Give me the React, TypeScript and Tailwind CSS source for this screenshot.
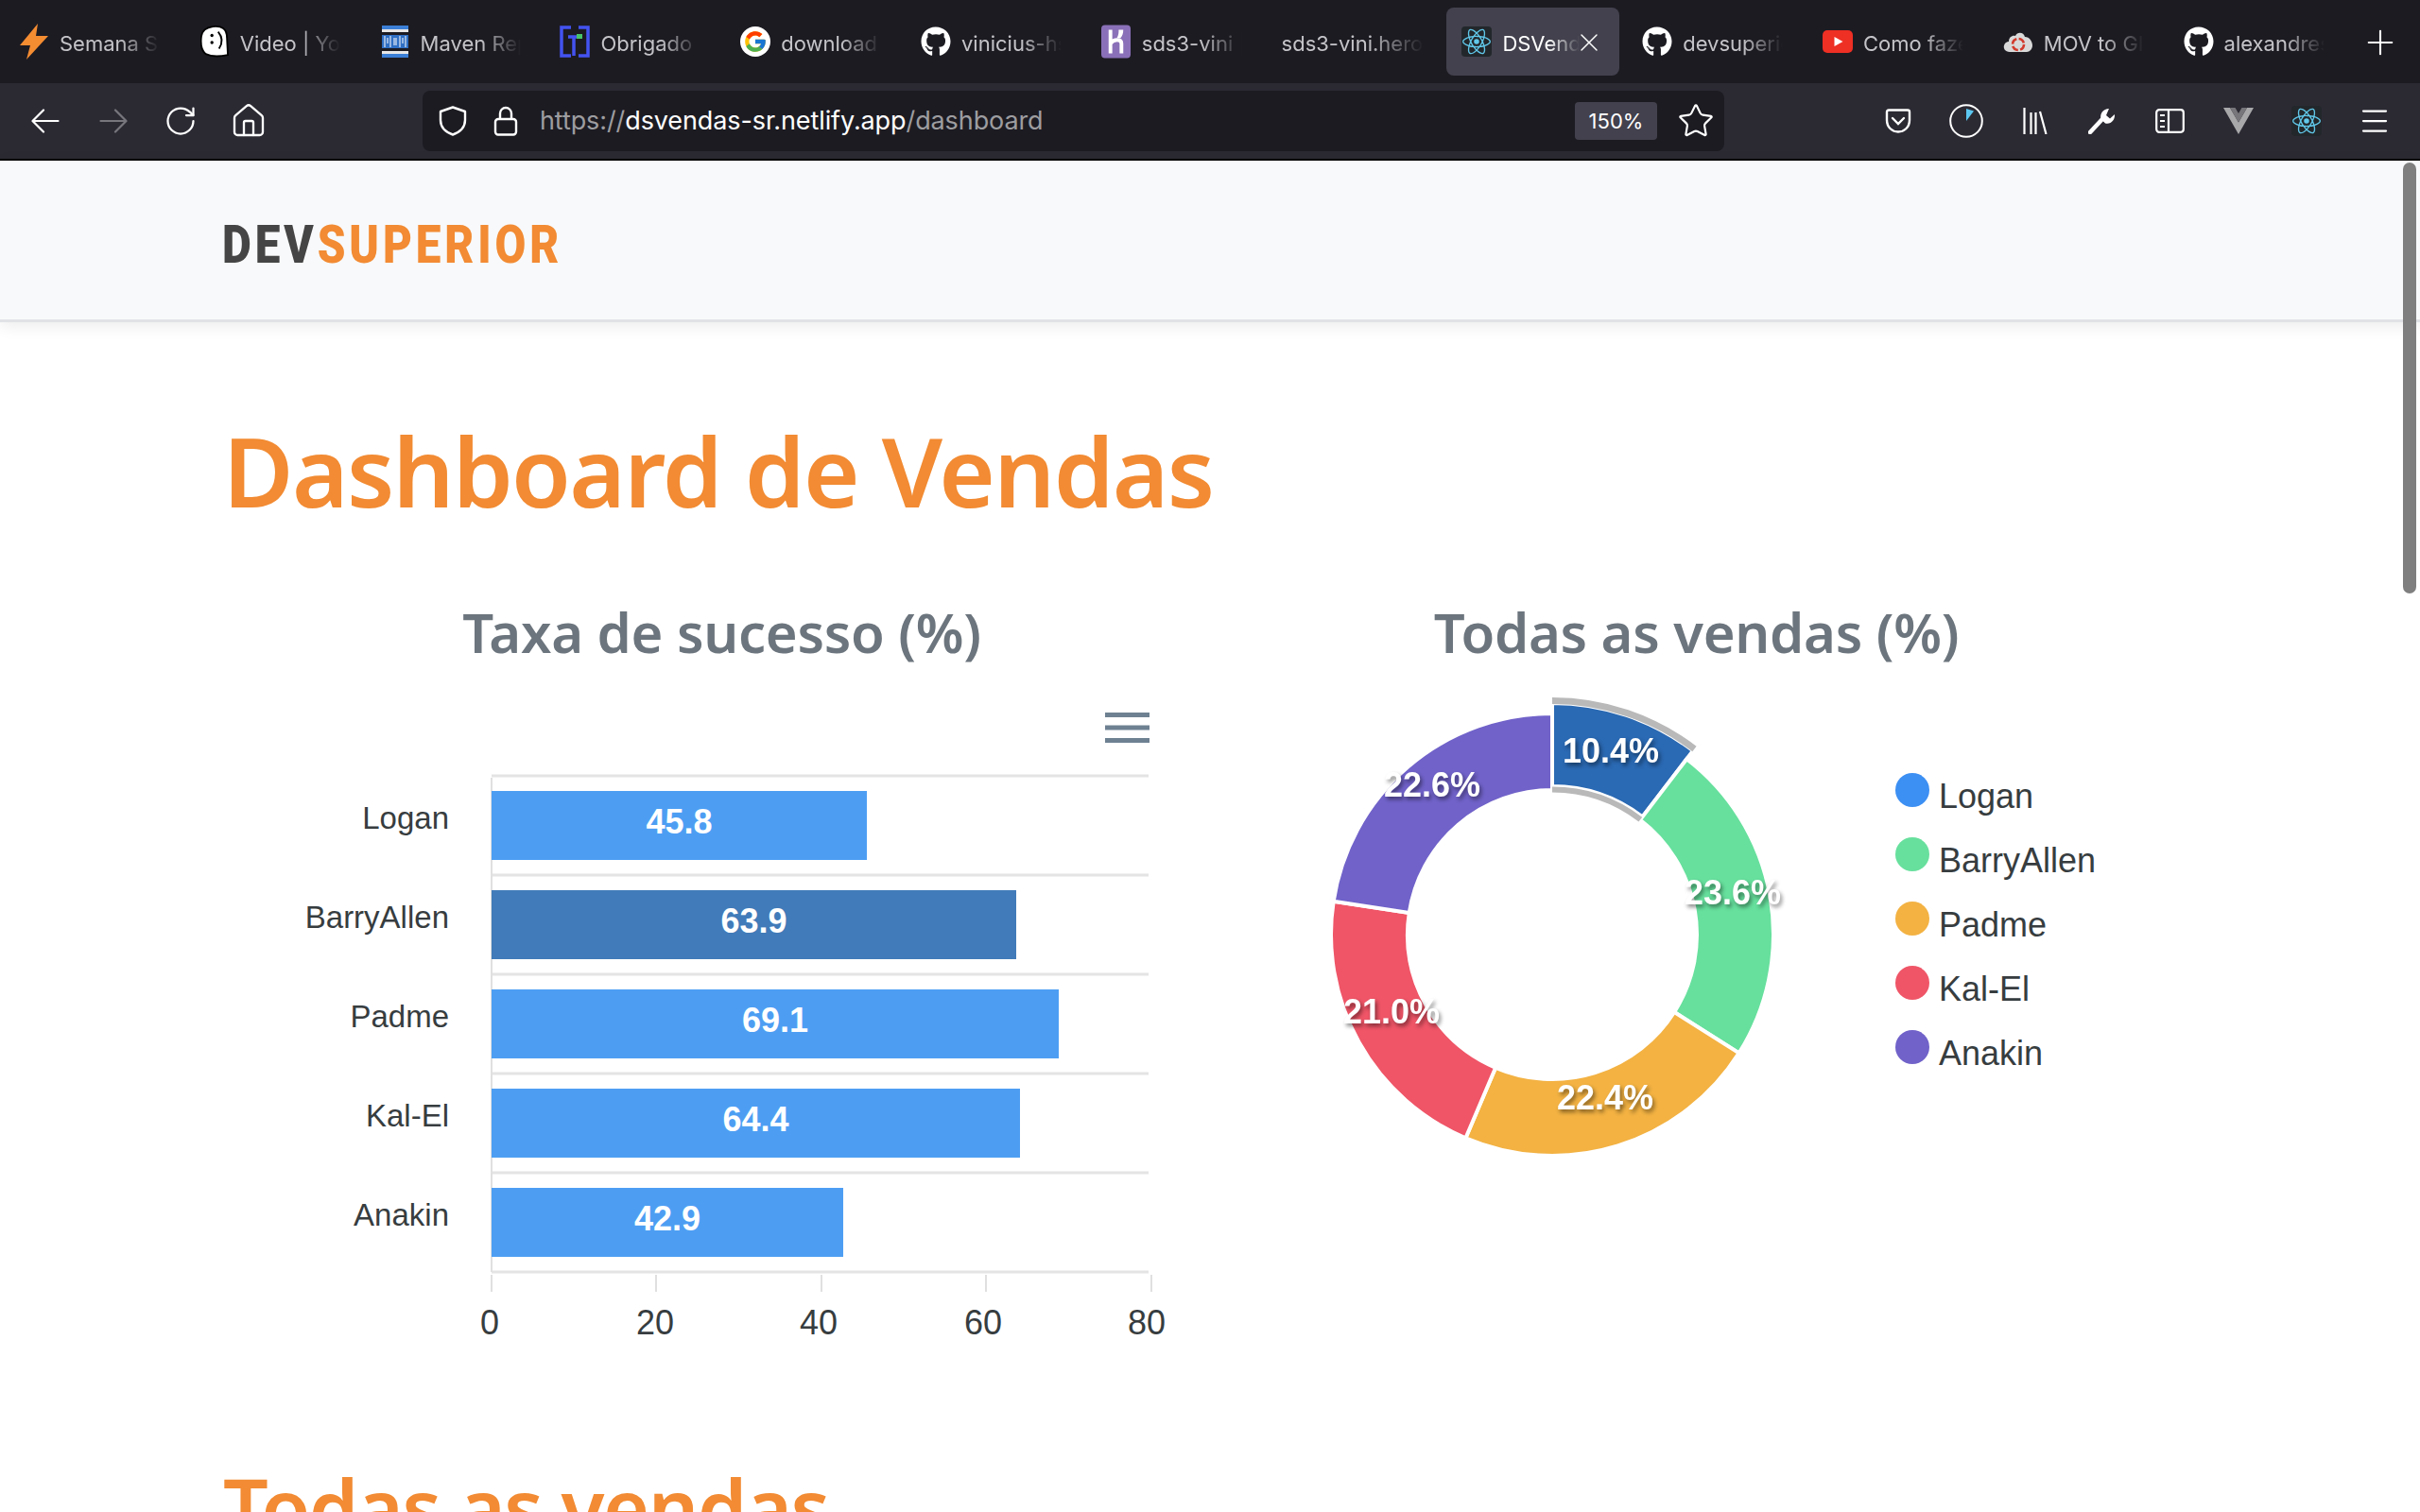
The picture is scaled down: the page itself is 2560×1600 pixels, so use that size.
import type { ReactNode } from 'react';
import { House, Menu, Plus, RotateCw, Star, X } from 'lucide-react';
import { FaGithub } from 'react-icons/fa';
import { FcGoogle } from 'react-icons/fc';
import { SiReact } from 'react-icons/si';

function BoltIcon() {
  return (
    <svg viewBox="0 0 30 38" className="h-[38px] w-[30px]">
      <path d="M19 0 L0 23 L11 23 L7 38 L30 13 L17 13 Z" fill="#f48c32" />
    </svg>
  );
}

function BlobIcon() {
  return (
    <svg viewBox="0 0 32 36" className="h-[36px] w-[30px]">
      <path d="M14 1 C24 0 30 3 30 14 L31 33 C22 35 12 35 6 32 C1 28 0 20 1 12 C2 5 7 2 14 1 Z" fill="#fff" stroke="#000" strokeWidth="2" />
      <circle cx="13" cy="11" r="1.8" fill="#000" />
      <circle cx="13" cy="19" r="1.8" fill="#000" />
      <path d="M20 7 C25 13 25 20 21 26" fill="none" stroke="#000" strokeWidth="2" />
    </svg>
  );
}

function MavenIcon() {
  return (
    <svg viewBox="0 0 28 34" className="h-[34px] w-[28px]">
      <rect width="28" height="4" fill="#3b7fd6" />
      <rect y="4" width="28" height="3" fill="#e6e6e6" />
      <rect y="27" width="28" height="3" fill="#e6e6e6" />
      <rect y="30" width="28" height="4" fill="#3b7fd6" />
      <rect y="10" width="28" height="14" fill="#2f6fc4" />
      <path d="M3 11v12M6 13v6M9 11v12M13 13v8M15 13v8M19 11v12M22 13v6M25 11v12" stroke="#dfe8f5" strokeWidth="1.2" />
    </svg>
  );
}

function BracketIcon() {
  return (
    <svg viewBox="0 0 32 34" className="h-[34px] w-[32px]">
      <path d="M12 2H2v30h10M20 2h10v30H20" fill="none" stroke="#4353f0" strokeWidth="3.5" />
      <path d="M9 12h13M15 12v20" fill="none" stroke="#4353f0" strokeWidth="3.5" />
      <rect x="18" y="9" width="6" height="5" fill="#47c46a" />
    </svg>
  );
}

function HerokuIcon() {
  return (
    <svg viewBox="0 0 32 36" className="h-[36px] w-[31px]">
      <rect width="32" height="36" rx="4" fill="#8a70b8" />
      <path d="M10 5v26M10 20C14 15 22 15 22 20V31" fill="none" stroke="#fff" strokeWidth="4" />
      <path d="M19 5h5c0 4-1 7-3 9h-4c2-3 2-6 2-9Z" fill="#fff" />
    </svg>
  );
}

function CloudIcon() {
  return (
    <svg viewBox="0 0 32 24" className="h-[24px] w-[32px]">
      <path d="M7 23 C2 23 0 19 1 16 C2 13 4 12 6 12 C6 7 10 5 13 6 C15 1 22 2 23 7 C28 7 31 12 31 16 C31 20 28 23 25 23 Z" fill="#d9d9d9" />
      <circle cx="16" cy="15" r="6" fill="none" stroke="#d23a2c" strokeWidth="2.6" strokeDasharray="7 2.4" />
    </svg>
  );
}

function YoutubeIcon() {
  return (
    <svg viewBox="0 0 32 24" className="h-[24px] w-[32px]">
      <rect width="32" height="24" rx="5" fill="#ee2f24" />
      <path d="M12.5 7 L21.5 12 L12.5 17 Z" fill="#fff" />
    </svg>
  );
}

function ReactBadge() {
  return (
    <span className="flex h-[32px] w-[32px] items-center justify-center rounded-[4px] bg-[#22272b]">
      <SiReact className="h-[30px] w-[30px] text-[#61c8ea]" />
    </span>
  );
}

const TABS: { title: string; icon?: ReactNode; width: string; active?: boolean }[] = [
  { title: 'Semana Spring React', icon: <BoltIcon />, width: 'w-[106px]' },
  { title: 'Video | YouTube', icon: <BlobIcon />, width: 'w-[106px]' },
  { title: 'Maven Repository', icon: <MavenIcon />, width: 'w-[106px]' },
  { title: 'Obrigado - DevSuperior', icon: <BracketIcon />, width: 'w-[106px]' },
  { title: 'download google', icon: <FcGoogle className="h-[32px] w-[32px] rounded-full bg-white p-[3px]" />, width: 'w-[106px]' },
  { title: 'vinicius-hsilva', icon: <FaGithub className="h-[32px] w-[32px] text-white" />, width: 'w-[106px]' },
  { title: 'sds3-vini | Heroku', icon: <HerokuIcon />, width: 'w-[106px]' },
  { title: 'sds3-vini.herokuapp.com', width: 'w-[150px]' },
  { title: 'DSVendas', icon: <ReactBadge />, width: 'w-[82px]', active: true },
  { title: 'devsuperior/sds3', icon: <FaGithub className="h-[32px] w-[32px] text-white" />, width: 'w-[106px]' },
  { title: 'Como fazer um GIF', icon: <YoutubeIcon />, width: 'w-[106px]' },
  { title: 'MOV to GIF', icon: <CloudIcon />, width: 'w-[106px]' },
  { title: 'alexandresantos', icon: <FaGithub className="h-[32px] w-[32px] text-white" />, width: 'w-[106px]' },
];

function TabBar() {
  return (
    <div className="flex h-[88px] items-start bg-[#1c1b22] font-['Inter',sans-serif]">
      {TABS.map((tab) => (
        <div key={tab.title} className="h-[88px] w-[190.8px] shrink-0 px-[4px] pt-[8px]">
          <div className={`relative flex h-[72px] items-center gap-[11px] rounded-[8px] pl-[16px] ${tab.active ? 'bg-[#42414d]' : ''}`}>
            {tab.icon && <span className="flex w-[32px] shrink-0 justify-center">{tab.icon}</span>}
            <span
              className={`${tab.width} overflow-hidden whitespace-nowrap pt-[3px] text-[22px] leading-[32px] [mask-image:linear-gradient(to_right,black_60%,transparent)] ${tab.active ? 'text-white' : 'text-[#c4c4c8]'}`}
            >
              {tab.title}
            </span>
            {tab.active && <X className="absolute right-[16px] top-[21px] h-[32px] w-[32px] text-white" strokeWidth={1.1} />}
          </div>
        </div>
      ))}
      <Plus className="ml-[17px] mt-[24px] h-[42px] w-[42px] text-white" strokeWidth={1.2} />
    </div>
  );
}

function BackIcon({ className }: { className: string }) {
  return (
    <svg viewBox="0 0 30 26" className={`h-[26px] w-[30px] ${className}`} fill="none" stroke="currentColor" strokeWidth="2.2" strokeLinecap="round" strokeLinejoin="round">
      <path d="M28.5 13H2M13 1.5L1.5 13L13 24.5" />
    </svg>
  );
}

function ForwardIcon({ className }: { className: string }) {
  return (
    <svg viewBox="0 0 30 26" className={`h-[26px] w-[30px] ${className}`} fill="none" stroke="currentColor" strokeWidth="2.2" strokeLinecap="round" strokeLinejoin="round">
      <path d="M1.5 13H28M17 1.5L28.5 13L17 24.5" />
    </svg>
  );
}

function ShieldIcon() {
  return (
    <svg viewBox="0 0 30 32" className="h-[32px] w-[30px]" fill="none" stroke="#fff" strokeWidth="2.4" strokeLinejoin="round">
      <path d="M15 1.5 L28 6 V15 C28 23 22 28 15 30.5 C8 28 2 23 2 15 V6 Z" />
    </svg>
  );
}

function LockIcon() {
  return (
    <svg viewBox="0 0 26 32" className="h-[32px] w-[26px]" fill="none" stroke="#fff" strokeWidth="2.4">
      <rect x="2" y="14" width="22" height="16.5" rx="3" />
      <path d="M7 14V8a6 6 0 0 1 12 0v6" />
    </svg>
  );
}

function PocketIcon() {
  return (
    <svg viewBox="0 0 28 26" className="h-[26px] w-[28px]" fill="none" stroke="#fff" strokeWidth="2.4">
      <path d="M2 3.5 Q2 1.5 4 1.5 H24 Q26 1.5 26 3.5 V12 C26 20 20 24.5 14 24.5 C8 24.5 2 20 2 12 Z" />
      <path d="M8 10 L14 16 L20 10" strokeLinecap="round" />
    </svg>
  );
}

function TimerIcon() {
  return (
    <svg viewBox="0 0 36 36" className="h-[36px] w-[36px]">
      <circle cx="18" cy="18" r="16.8" fill="none" stroke="#fff" strokeWidth="2" />
      <path d="M18 5 L26 7.5 L18 18 Z" fill="#5cc8f2" />
    </svg>
  );
}

function LibraryIcon() {
  return (
    <svg viewBox="0 0 26 28" className="h-[28px] w-[26px]" stroke="#fff" strokeWidth="2.2" fill="none">
      <path d="M1.5 0v28M8.5 5v23M13.5 5v23M18 4l6.5 24" />
    </svg>
  );
}

function WrenchIcon() {
  return (
    <svg viewBox="0 0 29 28" className="h-[28px] w-[29px]">
      <path d="M2 26 L15 12" stroke="#fff" strokeWidth="4.5" strokeLinecap="round" />
      <path d="M22 1 C16 1 12 6 13.5 12 L18 16.5 C24 18 28.5 13 28 7 L23 11.5 L19 8 Z" fill="#fff" />
    </svg>
  );
}

function SidebarIcon() {
  return (
    <svg viewBox="0 0 31 26" className="h-[26px] w-[31px]" fill="none" stroke="#fff" strokeWidth="2.2">
      <rect x="1.2" y="1.2" width="28.6" height="23.6" rx="3" />
      <path d="M14 1v24M5 7h5M5 13h5M5 19h5" />
    </svg>
  );
}

function VueIcon() {
  return (
    <svg viewBox="0 0 32 28" className="h-[28px] w-[32px]">
      <path d="M0 0 L16 28 L32 0 H25 L16 15.5 L7 0 Z" fill="#a8a8aa" />
      <path d="M7 0 L16 15.5 L25 0 H19.5 L16 6 L12.5 0 Z" fill="#77777b" />
    </svg>
  );
}

function ToolBar() {
  return (
    <div className="flex h-[80px] items-center bg-[#2b2a33] pl-[33px] text-white">
      <BackIcon className="text-white" />
      <ForwardIcon className="ml-[42px] text-[#77767d]" />
      <RotateCw className="ml-[38px] h-[36px] w-[36px]" strokeWidth={1.5} />
      <House className="ml-[34px] h-[40px] w-[40px]" strokeWidth={1.4} />

      <div className="ml-[164px] flex h-[64px] w-[1377px] items-center rounded-[8px] bg-[#1c1b22] pl-[17px] font-['Inter',sans-serif]">
        <ShieldIcon />
        <span className="ml-[28px]"><LockIcon /></span>
        <span className="ml-[23px] pt-[1px] text-[27px] tracking-[-0.1px] text-[#9d9da0]">
          https://<span className="text-white">dsvendas-sr.netlify.app</span>/dashboard
        </span>
        <span className="ml-auto flex h-[40px] w-[87px] items-center justify-center rounded-[4px] bg-[#42414d] text-[22px]">150%</span>
        <Star className="ml-[21px] mr-[10px] h-[40px] w-[40px]" strokeWidth={1.3} />
      </div>

      <div className="ml-[170px] flex items-center">
        <PocketIcon />
        <span className="ml-[40px]"><TimerIcon /></span>
        <span className="ml-[42px]"><LibraryIcon /></span>
        <span className="ml-[43px]"><WrenchIcon /></span>
        <span className="ml-[42px]"><SidebarIcon /></span>
        <span className="ml-[41px]"><VueIcon /></span>
        <span className="ml-[40px]"><ReactBadge /></span>
        <Menu className="ml-[38px] h-[36px] w-[36px]" strokeWidth={1.5} />
      </div>
    </div>
  );
}

function Header() {
  return (
    <header className="flex h-[171px] items-center border-b-[3px] border-[#e0e2e6] bg-[#f8f9fa] pl-[235px] pt-[10px] shadow-[0_4px_16px_rgba(0,0,0,0.08)]">
      <span className="origin-left scale-x-[0.85] font-['Roboto',sans-serif] text-[56px] font-black leading-none tracking-[4.6px] text-[#454545]">
        DEV<span className="text-[#f28b33]">SUPERIOR</span>
      </span>
    </header>
  );
}

const BARS = [
  { name: 'Logan', value: '45.8', right: 917 },
  { name: 'BarryAllen', value: '63.9', right: 1075, hover: true },
  { name: 'Padme', value: '69.1', right: 1120 },
  { name: 'Kal-El', value: '64.4', right: 1079 },
  { name: 'Anakin', value: '42.9', right: 892 },
];

const X_TICKS = [
  { label: '0', tick: 520, text: 518 },
  { label: '20', tick: 694, text: 693 },
  { label: '40', tick: 869, text: 866 },
  { label: '60', tick: 1043, text: 1040 },
  { label: '80', tick: 1218, text: 1213 },
];

function BarChart() {
  return (
    <svg viewBox="248 730 1031 710" className="h-[710px] w-[1031px] font-['Liberation_Sans',sans-serif]">
      <path d="M1169 755.5h47M1169 769h47M1169 782.5h47" stroke="#6e8192" strokeWidth="5" />
      {[0, 1, 2, 3, 4, 5].map((i) => (
        <line key={i} x1="520" x2="1215" y1={820 + i * 105} y2={820 + i * 105} stroke="#e4e4e4" strokeWidth="3" />
      ))}
      <line x1="520" x2="520" y1="822" y2="1345" stroke="#e0e0e0" strokeWidth="2" />
      {X_TICKS.map((t) => (
        <g key={t.label}>
          <line x1={t.tick} x2={t.tick} y1="1348" y2="1366" stroke="#e0e0e0" strokeWidth="2" />
          <text x={t.text} y="1411" textAnchor="middle" fontSize="36" fill="#373d3f">{t.label}</text>
        </g>
      ))}
      {BARS.map((b, i) => (
        <g key={b.name}>
          <rect x="520" y={836 + i * 105} width={b.right - 520} height="73" fill={b.hover ? '#417bb9' : '#4d9ef3'} />
          <text x="475" y={876 + i * 105} textAnchor="end" fontSize="33" fill="#373d3f">{b.name}</text>
          <text x={(520 + b.right) / 2} y={881 + i * 105} textAnchor="middle" fontSize="36" fontWeight="700" fill="#fff">{b.value}</text>
        </g>
      ))}
    </svg>
  );
}

const CX = 1642;
const CY = 988;

function polar(r: number, deg: number) {
  const a = ((deg - 90) * Math.PI) / 180;
  return `${CX + r * Math.cos(a)} ${CY + r * Math.sin(a)}`;
}

function slicePath(r0: number, r1: number, from: number, to: number) {
  const large = to - from > 180 ? 1 : 0;
  return `M${polar(r1, from)} A${r1} ${r1} 0 ${large} 1 ${polar(r1, to)} L${polar(r0, to)} A${r0} ${r0} 0 ${large} 0 ${polar(r0, from)} Z`;
}

function arcPath(r: number, from: number, to: number) {
  return `M${polar(r, from)} A${r} ${r} 0 0 1 ${polar(r, to)}`;
}

const SLICES = [
  { name: 'Logan', pct: 10.4, color: '#2a69b3', dot: '#3c8ff3', lx: 1704, ly: 806 },
  { name: 'BarryAllen', pct: 23.6, color: '#67e09d', dot: '#67e09d', lx: 1833, ly: 956 },
  { name: 'Padme', pct: 22.4, color: '#f3b242', dot: '#f3b242', lx: 1698, ly: 1173 },
  { name: 'Kal-El', pct: 21.0, color: '#ef5567', dot: '#ef5567', lx: 1472, ly: 1082 },
  { name: 'Anakin', pct: 22.6, color: '#7062c9', dot: '#7062c9', lx: 1515, ly: 842 },
];

function DonutChart() {
  let start = 0;
  const slices = SLICES.map((s) => {
    const from = start;
    start += s.pct * 3.6;
    return { ...s, from, to: start };
  });
  return (
    <div className="flex font-['Liberation_Sans',sans-serif]">
      <svg viewBox="1279 730 722 510" className="h-[510px] w-[722px] shrink-0">
        {slices.map((s, i) => (
          <path
            key={s.name}
            d={i === 0 ? slicePath(157, 245, s.from, s.to) : slicePath(153, 234, s.from, s.to)}
            fill={s.color}
            stroke="#fff"
            strokeWidth="4"
          />
        ))}
        <path d={arcPath(247.5, slices[0].from, slices[0].to)} fill="none" stroke="#b9b9b9" strokeWidth="7" />
        <path d={arcPath(153.5, slices[0].from, slices[0].to)} fill="none" stroke="#b9b9b9" strokeWidth="6" />
        <g className="drop-shadow-[2px_3px_2px_rgba(0,0,0,0.45)]">
          {slices.map((s) => (
            <text key={s.name} x={s.lx} y={s.ly} textAnchor="middle" fontSize="36" fontWeight="700" fill="#fff">
              {s.pct.toFixed(1)}%
            </text>
          ))}
        </g>
      </svg>
      <ul className="ml-[4px] flex flex-col pt-[87px]">
        {SLICES.map((s) => (
          <li key={s.name} className="flex h-[68px] items-start gap-[10px]">
            <span className="h-[36px] w-[36px] rounded-full" style={{ backgroundColor: s.dot }} />
            <span className="mt-[4px] text-[36px] leading-[42px] text-[#373d3f]">{s.name}</span>
          </li>
        ))}
      </ul>
    </div>
  );
}

export default function App() {
  return (
    <div className="relative h-[1600px] w-[2560px] overflow-hidden bg-white">
      <TabBar />
      <ToolBar />
      <div className="h-[2px] bg-black" />
      <Header />
      <main className="font-['Noto_Sans',sans-serif]">
        <h1 className="ml-[236px] mt-[87px] text-[102px] font-semibold leading-[140px] tracking-[-1.7px] text-[#f28b33]">Dashboard de Vendas</h1>
        <div className="ml-[248px] mt-[61px] grid w-[2062px] grid-cols-2">
          <section>
            <h2 className="mb-[22px] text-center text-[58px] font-semibold leading-[80px] tracking-[-0.3px] text-[#6c757d]">Taxa de sucesso (%)</h2>
            <BarChart />
          </section>
          <section>
            <h2 className="mb-[22px] text-center text-[58px] font-semibold leading-[80px] tracking-[-0.3px] text-[#6c757d]">Todas as vendas (%)</h2>
            <DonutChart />
          </section>
        </div>
        <h1 className="ml-[236px] mt-[94px] text-[84px] font-semibold leading-[120px] tracking-[-1.5px] text-[#f28b33]">Todas as vendas</h1>
      </main>
      <div className="absolute right-[4px] top-[172px] h-[456px] w-[14px] rounded-full bg-[#7f7f7f]" />
    </div>
  );
}
